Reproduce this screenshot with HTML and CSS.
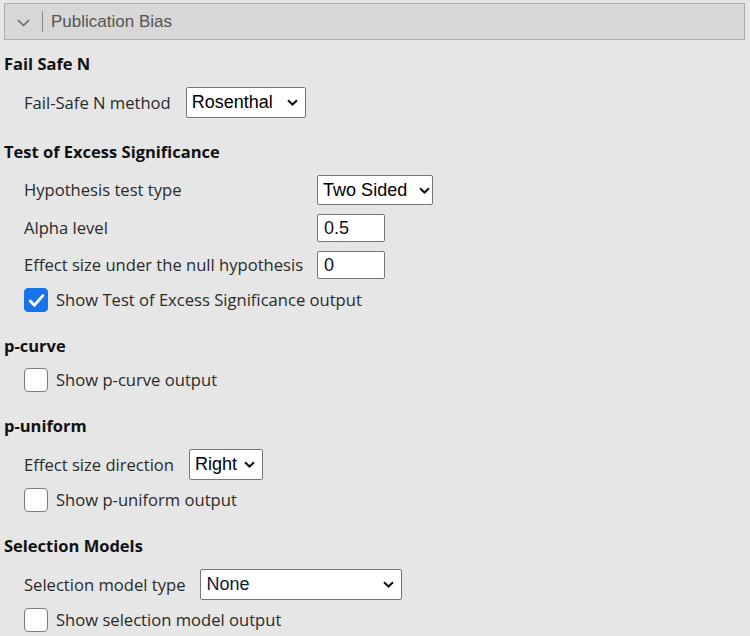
FILE: index.html
```html
<!DOCTYPE html>
<html>
<head>
<meta charset="utf-8">
<link rel="stylesheet" href="styles.css">
</head>
<body>
<div class="panel-header">
  <svg class="hdr-chev" width="13" height="8" viewBox="0 0 13 8"><path d="M1 1.2 L6.5 6.5 L12 1.2" fill="none" stroke="#6b6b6b" stroke-width="1.6"/></svg>
  <span class="hdr-sep"></span>
  <span class="hdr-title">Publication Bias</span>
</div>
<div class="content">
  <section class="section">
    <h2 class="heading">Fail Safe N</h2>
    <div class="row">
      <span class="label">Fail-Safe N method</span>
      <div class="select w-rosenthal"><span>Rosenthal</span><svg class="chev" width="11" height="7" viewBox="0 0 11 7"><path d="M1 1.2 L5.5 5.5 L10 1.2" fill="none" stroke="#111" stroke-width="2"/></svg></div>
    </div>
  </section>
  <section class="section">
    <h2 class="heading">Test of Excess Significance</h2>
    <div class="grid">
      <span class="label">Hypothesis test type</span>
      <div class="select w-two"><span>Two Sided</span><svg class="chev" width="11" height="7" viewBox="0 0 11 7"><path d="M1 1.2 L5.5 5.5 L10 1.2" fill="none" stroke="#111" stroke-width="2"/></svg></div>
      <span class="label">Alpha level</span>
      <input class="num" type="text" value="0.5">
      <span class="label">Effect size under the null hypothesis</span>
      <input class="num" type="text" value="0">
    </div>
    <label class="check-row first"><span class="cb checked"><svg width="17" height="15" viewBox="0 0 17 15"><path d="M2.2 8 L6.4 12.2 L14.8 2.6" fill="none" stroke="#fff" stroke-width="2.9" stroke-linecap="round" stroke-linejoin="round"/></svg></span><span class="label">Show Test of Excess Significance output</span></label>
  </section>
  <section class="section">
    <h2 class="heading">p-curve</h2>
    <label class="check-row"><span class="cb"></span><span class="label">Show p-curve output</span></label>
  </section>
  <section class="section">
    <h2 class="heading">p-uniform</h2>
    <div class="row">
      <span class="label">Effect size direction</span>
      <div class="select w-right"><span>Right</span><svg class="chev" width="11" height="7" viewBox="0 0 11 7"><path d="M1 1.2 L5.5 5.5 L10 1.2" fill="none" stroke="#111" stroke-width="2"/></svg></div>
    </div>
    <label class="check-row"><span class="cb"></span><span class="label">Show p-uniform output</span></label>
  </section>
  <section class="section">
    <h2 class="heading">Selection Models</h2>
    <div class="row">
      <span class="label">Selection model type</span>
      <div class="select w-none"><span class="sel-none">None</span><svg class="chev" width="11" height="7" viewBox="0 0 11 7"><path d="M1 1.2 L5.5 5.5 L10 1.2" fill="none" stroke="#111" stroke-width="2"/></svg></div>
    </div>
    <label class="check-row"><span class="cb"></span><span class="label">Show selection model output</span></label>
  </section>
</div>
</body>
</html>
```

FILE: styles.css
```css
* { box-sizing: border-box; }
body {
  margin: 0;
  background: #e6e6e6;
  font-family: "Open Sans", "Noto Sans", sans-serif;
  color: #222;
}
.panel-header {
  margin: 3px 5px 0 4px;
  height: 37px;
  border: 1px solid #ababab;
  background: #d7d7d7;
  display: flex;
  align-items: center;
  padding-left: 12px;
}
.hdr-chev { display: block; margin-top: 2px; }
.hdr-sep {
  width: 1px;
  height: 21px;
  background: #8a8a8a;
  margin-left: 12px;
}
.hdr-title {
  margin-left: 8px;
  font-family: "Liberation Sans", Arial, sans-serif;
  font-size: 17px;
  color: #545454;
}
.content {
  padding: 12px 0 0 4px;
}
.section {
  display: flex;
  flex-direction: column;
  align-items: flex-start;
  gap: 9px;
  margin-bottom: 22px;
}
.heading {
  margin: 0 0 2px 0;
  font-size: 16.5px;
  line-height: 24px;
  height: 24px;
  font-weight: 700;
  color: #111;
}
.label {
  font-size: 16.6px;
  line-height: 24px;
  color: #2a2a2a;
  white-space: nowrap;
}
.row {
  display: flex;
  align-items: center;
  gap: 15px;
  padding-left: 20px;
}
.grid {
  display: grid;
  grid-template-columns: auto auto;
  column-gap: 14px;
  row-gap: 9px;
  align-items: center;
  justify-items: start;
  padding-left: 20px;
}
.select {
  display: flex;
  align-items: center;
  justify-content: space-between;
  height: 31px;
  background: #fff;
  border: 1px solid #767676;
  border-radius: 2px;
  padding: 0 7px 0 5px;
  font-family: "Liberation Sans", Arial, sans-serif;
  font-size: 18px;
  color: #000;
}
.chev { display: block; flex: none; }
.w-rosenthal { width: 120px; }
.w-two { width: 116px; height: 30px; padding-right: 2px; }
.w-right { width: 74px; }
.w-none { width: 202px; }
.sel-none { color: #0b1a3a; }
.num {
  width: 68px;
  height: 28px;
  border: 1px solid #767676;
  border-radius: 2px;
  background: #fff;
  padding: 0 6px;
  font-family: "Liberation Sans", Arial, sans-serif;
  font-size: 18px;
  color: #111;
  margin: 0;
}
.check-row {
  display: flex;
  align-items: center;
  gap: 8px;
  padding-left: 20px;
  margin-top: -1px;
}
.check-row.first { margin-top: 0; }
.cb {
  width: 24px;
  height: 24px;
  border: 1.5px solid #7a7a7a;
  border-radius: 4px;
  background: #fff;
  display: flex;
  align-items: center;
  justify-content: center;
  flex: none;
}
.cb.checked {
  background: #1673ec;
  border-color: #1673ec;
}
.cb svg { display: block; }
```
